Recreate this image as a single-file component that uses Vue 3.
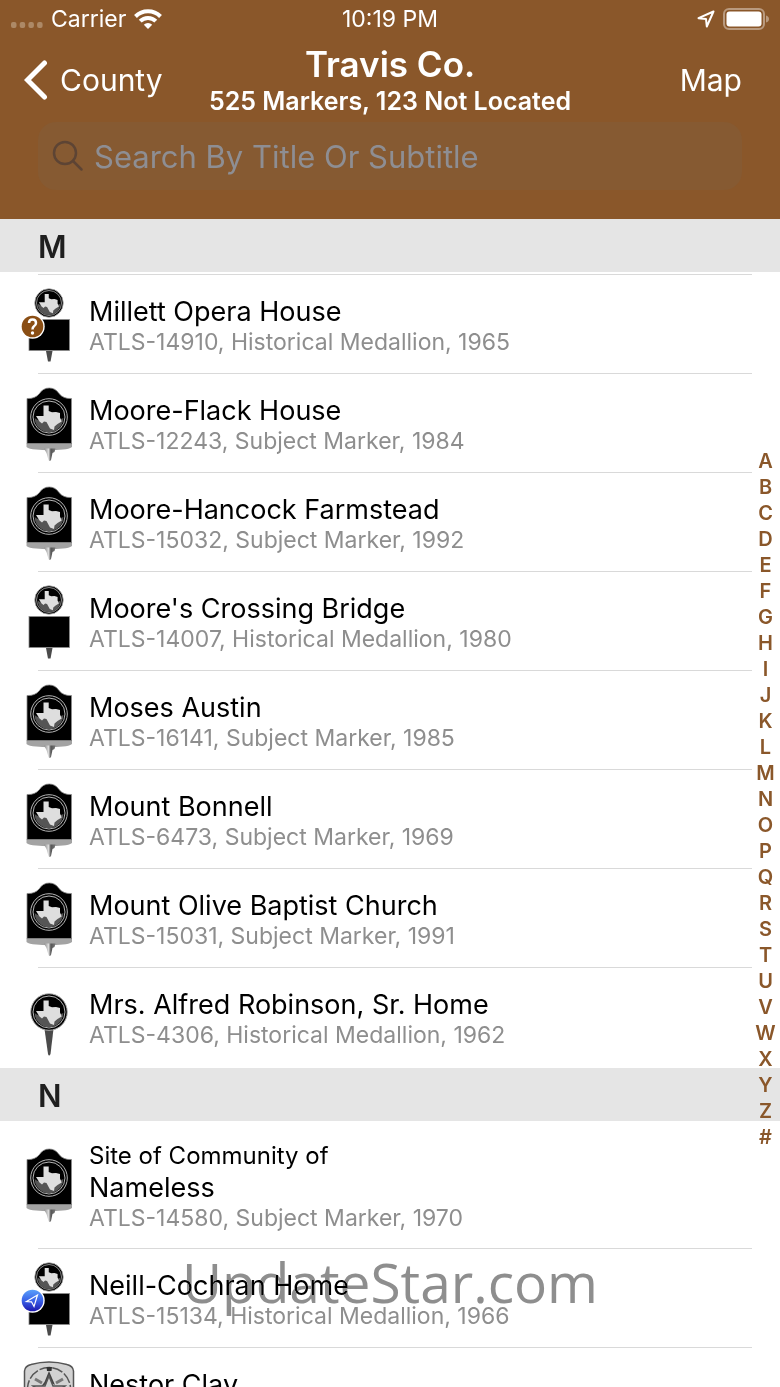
<script setup>
import { ref } from 'vue'

const search = ref('')

const sections = [
  {
    letter: 'M',
    markers: [
      { title: 'Millett Opera House', detail: 'ATLS-14910, Historical Medallion, 1965', icon: 'medallion', badge: 'unknown' },
      { title: 'Moore-Flack House', detail: 'ATLS-12243, Subject Marker, 1984', icon: 'subject' },
      { title: 'Moore-Hancock Farmstead', detail: 'ATLS-15032, Subject Marker, 1992', icon: 'subject' },
      { title: "Moore's Crossing Bridge", detail: 'ATLS-14007, Historical Medallion, 1980', icon: 'medallion' },
      { title: 'Moses Austin', detail: 'ATLS-16141, Subject Marker, 1985', icon: 'subject' },
      { title: 'Mount Bonnell', detail: 'ATLS-6473, Subject Marker, 1969', icon: 'subject' },
      { title: 'Mount Olive Baptist Church', detail: 'ATLS-15031, Subject Marker, 1991', icon: 'subject' },
      { title: 'Mrs. Alfred Robinson, Sr. Home', detail: 'ATLS-4306, Historical Medallion, 1962', icon: 'pin' }
    ]
  },
  {
    letter: 'N',
    markers: [
      { pretitle: 'Site of Community of', title: 'Nameless', detail: 'ATLS-14580, Subject Marker, 1970', icon: 'subject' },
      { title: 'Neill-Cochran Home', detail: 'ATLS-15134, Historical Medallion, 1966', icon: 'medallion', badge: 'located' },
      { title: 'Nestor Clay', icon: 'stone' }
    ]
  }
]

const letters = 'ABCDEFGHIJKLMNOPQRSTUVWXYZ#'.split('')

// Seal position and scale for each kind of marker
const seals = {
  subject: 'translate(30 31)',
  medallion: 'translate(30 16) scale(0.78)',
  pin: 'translate(30 32)'
}
</script>

<template>
  <div class="screen">
    <header class="top">
      <div class="status">
        <div class="status-side">
          <svg class="dots" width="32" height="8" viewBox="0 0 32 8">
            <rect v-for="n in 4" :key="n" :x="(n - 1) * 8.700" y="1" width="5.500" height="6" rx="2" />
          </svg>
          <span>Carrier</span>
          <svg width="28" height="22" viewBox="0 0 28 22" fill="none" stroke="#fff" stroke-width="4">
            <path d="M1.500 8.500A17.500 17.500 0 0 1 26.500 8.500" />
            <path d="M6.200 13.200A11 11 0 0 1 21.800 13.200" />
            <path d="M14 21L9.800 16.800A6 6 0 0 1 18.200 16.800Z" fill="#fff" stroke="none" />
          </svg>
        </div>
        <span>10:19 PM</span>
        <div class="status-side right">
          <svg width="18" height="18" viewBox="0 0 18 18" fill="none" stroke="#fff" stroke-width="2" stroke-linejoin="round">
            <path d="M16.500 1.500L1.500 8.200L9 9L9.800 16.500Z" />
          </svg>
          <svg width="46" height="22" viewBox="0 0 46 22">
            <rect x="1" y="1" width="40" height="20" rx="5" fill="none" stroke="#b99a7f" stroke-width="2" />
            <rect x="3.500" y="3.500" width="35" height="15" rx="3" fill="#fff" />
            <path d="M43 7.500Q46 8.500 46 11T43 14.500Z" fill="#b99a7f" />
          </svg>
        </div>
      </div>

      <nav class="nav">
        <button type="button" class="nav-btn">
          <svg width="24" height="40" viewBox="0 0 24 40" fill="none" stroke="#fff" stroke-width="5" stroke-linecap="round" stroke-linejoin="miter">
            <path d="M20.500 3L3.500 20L20.500 37" />
          </svg>
          County
        </button>
        <div class="heading">
          <h1>Travis Co.</h1>
          <p>525 Markers, 123 Not Located</p>
        </div>
        <button type="button" class="nav-btn end">Map</button>
      </nav>

      <label class="search">
        <svg width="32" height="32" viewBox="0 0 32 32" fill="none" stroke="#5d4434" stroke-width="2.500" stroke-linecap="round">
          <circle cx="13" cy="13" r="11" />
          <path d="M21 21L29.500 29.500" />
        </svg>
        <input v-model="search" type="text" aria-label="Search" placeholder="Search By Title Or Subtitle">
      </label>
    </header>

    <main class="content">
      <section v-for="section in sections" :key="section.letter">
        <h2>{{ section.letter }}</h2>
        <ul>
          <li v-for="marker in section.markers" :key="marker.title" class="row">
            <svg class="icon" width="60" height="76" viewBox="0 0 60 76">
              <defs>
                <linearGradient id="metal" x1="0" x2="1">
                  <stop offset="0" stop-color="#8a8a8a" />
                  <stop offset="0.4" stop-color="#dcdcdc" />
                  <stop offset="0.6" stop-color="#555" />
                  <stop offset="1" stop-color="#777" />
                </linearGradient>
                <linearGradient id="located" x1="0" y1="0" x2="0" y2="1">
                  <stop offset="0" stop-color="#5aa0fa" />
                  <stop offset="0.5" stop-color="#3a62e8" />
                  <stop offset="1" stop-color="#1c17ae" />
                </linearGradient>
              </defs>

              <g v-if="marker.icon === 'subject'">
                <path d="M7.500 57H53V61Q50 63 44 63.500Q30 65 17 63.500Q10 63 7.500 61Z" fill="#a3a3a3" />
                <path d="M25 62.500H36.500L35.500 66L33.500 67L32 74Q30.500 76 29.500 74L27.500 67Z" fill="url(#metal)" />
                <path d="M8 12.500Q16 13 20.500 7.500Q24 2 30.200 2Q36.500 2 40 7.500Q44.500 13 52.500 12.500V57.500H8Z" fill="#000" stroke="#8c8c8c" stroke-width="0.800" />
              </g>
              <g v-else-if="marker.icon === 'medallion'">
                <path d="M27 64H33.500L31.500 74.500H29Z" fill="#4a4a4a" />
                <rect x="10" y="32.500" width="40.500" height="31" fill="#000" stroke="#8c8c8c" stroke-width="0.800" />
              </g>
              <path v-else-if="marker.icon === 'pin'" d="M25.500 49H34.500L31.500 74Q30 77 29 74Z" fill="#4a4a4a" />
              <g v-else fill="none" stroke="#555">
                <path d="M5.500 74V11Q6 6 12 4.500Q30 -0.500 48 4.500Q54 6 54.500 11V74Z" fill="#d2d2d2" stroke-width="1.500" />
                <circle cx="30" cy="29" r="21.500" stroke-width="1.500" stroke-dasharray="11 2" />
                <path d="M27.500 7H33L32.500 11H28Z" fill="#333" stroke="none" />
                <path d="M30 11L36 25L30 22L21 28L25.500 22Z" fill="#444" stroke="none" />
                <path d="M30 16L34 26H46L36.500 33L40 45L30 38L20 45L23.500 33L14 26H26Z" fill="#d2d2d2" stroke-width="1.500" />
                <path d="M16 19L23 23M44 19L37 23" stroke="#777" stroke-width="3" />
              </g>

              <g v-if="seals[marker.icon]" :transform="seals[marker.icon]">
                <circle r="18.300" fill="#000" stroke="#b4b4b4" />
                <circle r="16" fill="none" stroke="#b4b4b4" />
                <path d="M-14.300 1Q-10 5 0 3Q8 5 14.300 1A14.300 14.300 0 0 1 -14.300 1Z" fill="#555" />
                <path d="M-5.500 -11.500H-0.300V-6L3 -4.700L7 -5L11 -4V0.500L12.700 4.500L8.500 7L5.500 9.500L5 13L1 11.500L-2.500 5L-5 4.500L-7 6.500L-9.500 4.500L-13 -1H-5.500Z" fill="#dedede" />
              </g>

              <g v-if="marker.badge" transform="translate(13.500 39.500)">
                <circle r="12.200" fill="#fff" />
                <circle r="10.800" :fill="marker.badge === 'unknown' ? '#8a4e14' : 'url(#located)'" />
                <g v-if="marker.badge === 'unknown'">
                  <path d="M-3.500 -3.500Q-3.500 -7 0 -7T3.500 -3.500Q3.500 -1.500 1.500 -0.300Q0 0.800 0 3" fill="none" stroke="#fff" stroke-width="2.500" />
                  <circle cy="6.500" r="1.700" fill="#fff" />
                </g>
                <path v-else d="M5 -5.500L-6 1L-1 1.300L1.500 6Z" fill="none" stroke="#fff" stroke-width="1.200" />
              </g>
            </svg>
            <div class="text">
              <p v-if="marker.pretitle" class="pretitle">{{ marker.pretitle }}</p>
              <h3>{{ marker.title }}</h3>
              <p class="detail">{{ marker.detail }}</p>
            </div>
          </li>
        </ul>
      </section>

      <nav class="index" aria-label="Index">
        <a v-for="letter in letters" :key="letter" href="#">{{ letter }}</a>
      </nav>
    </main>

    <div class="watermark">UpdateStar.com</div>
  </div>
</template>

<style>
body {
  margin: 0;
  background: #fff;
}
</style>

<style scoped>
.screen {
  position: relative;
  display: flex;
  flex-direction: column;
  height: 100vh;
  overflow: hidden;
  font-family: Inter, "Liberation Sans", sans-serif;
  color: #000;
}

h1, h2, h3, p, ul {
  margin: 0;
  padding: 0;
}

/* Header */
.top {
  flex: none;
  padding-bottom: 29px;
  background: #8a572a;
  color: #fff;
}

.status {
  display: flex;
  align-items: center;
  height: 38px;
  padding: 0 11px;
  font-size: 23px;
}

.status-side {
  display: flex;
  flex: 1;
  align-items: center;
  gap: 8px;
}

.status-side.right {
  justify-content: flex-end;
}

.dots {
  margin-top: 12px;
  fill: #ad8966;
}

.nav {
  display: flex;
  align-items: center;
  height: 84px;
}

.nav-btn {
  display: flex;
  flex: 1;
  align-items: center;
  gap: 12px;
  padding: 0 38px 0 24px;
  border: none;
  background: none;
  color: #fff;
  font-family: inherit;
  font-size: 30px;
  cursor: pointer;
}

.nav-btn.end {
  justify-content: flex-end;
}

.heading {
  padding-top: 2px;
  text-align: center;
  white-space: nowrap;
}

h1 {
  font-size: 35px;
  font-weight: 600;
  line-height: 40px;
}

.heading p {
  font-size: 25px;
  font-weight: 600;
  line-height: 34px;
}

.search {
  display: flex;
  align-items: center;
  gap: 10px;
  height: 68px;
  margin: 0 38px;
  padding: 0 14px;
  box-sizing: border-box;
  border-radius: 18px;
  background: #865a32;
}

.search input {
  flex: 1;
  min-width: 0;
  padding: 0;
  border: none;
  outline: none;
  background: none;
  color: #fff;
  font-family: inherit;
  font-size: 31px;
}

.search input::placeholder {
  color: #8e8e93;
  opacity: 1;
}

/* Marker list */
.content {
  position: relative;
  flex: 1;
  min-height: 0;
}

h2 {
  height: 53px;
  padding-left: 38px;
  background: #e5e5e5;
  color: #1f1f1f;
  font-size: 31px;
  font-weight: 600;
  line-height: 56px;
}

ul {
  list-style: none;
}

section:first-child ul {
  padding: 2px 0 1px;
}

section:first-child ul::before {
  content: "";
  display: block;
  height: 1px;
  margin: 0 28px 0 38px;
  background: #d9d9d9;
}

.row {
  display: flex;
  align-items: center;
  min-height: 99px;
  padding-left: 19px;
  box-sizing: border-box;
  background: linear-gradient(#d9d9d9, #d9d9d9) no-repeat 38px 100% / calc(100% - 66px) 1px;
}

.row:last-child {
  background: none;
}

.icon {
  flex: none;
}

.text {
  padding: 19px 0 17px 10px;
}

.pretitle {
  font-size: 24px;
  line-height: 32px;
}

h3 {
  font-size: 27px;
  font-weight: 400;
  line-height: 32px;
}

.detail {
  min-height: 28px;
  color: #8e8e8e;
  font-size: 23px;
  line-height: 28px;
}

/* Letter index over the right edge */
.index {
  position: absolute;
  top: 0;
  right: 0;
  bottom: 8px;
  display: flex;
  flex-direction: column;
  justify-content: center;
  width: 29px;
}

.index a {
  color: #8a572a;
  font-size: 20px;
  font-weight: 600;
  line-height: 26px;
  text-align: center;
  text-decoration: none;
}

.watermark {
  position: absolute;
  right: 0;
  bottom: 65px;
  left: 0;
  color: #8e8e8e;
  font-family: "Open Sans", "Noto Sans", sans-serif;
  font-size: 55px;
  line-height: 80px;
  text-align: center;
  pointer-events: none;
  mix-blend-mode: darken;
}
</style>
